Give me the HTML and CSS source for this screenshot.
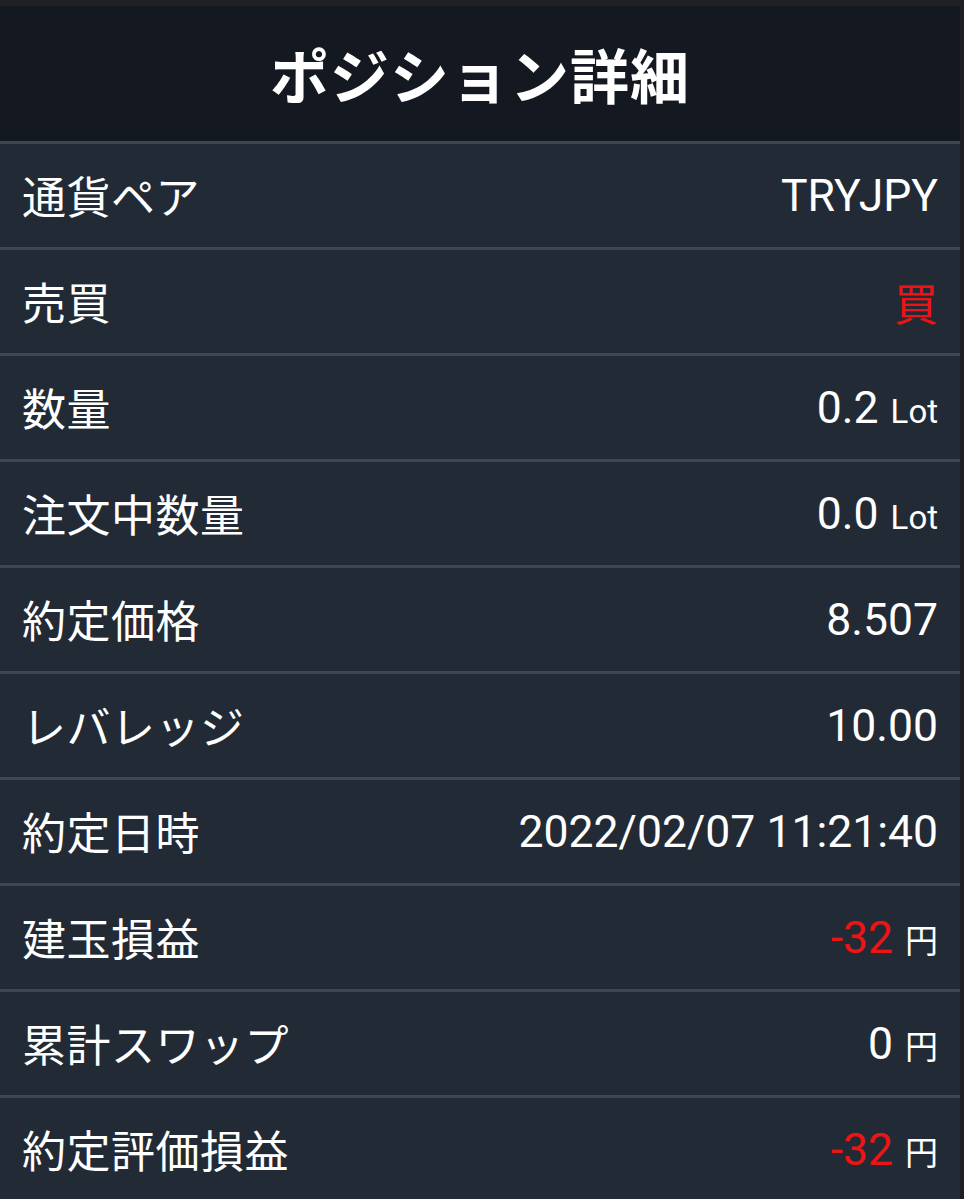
FILE: index.html
```html
<!DOCTYPE html>
<html lang="ja">
<head>
    <meta charset="UTF-8" />
    <meta name="viewport" content="width=device-width, initial-scale=1.0"/>
    <title>ポジション詳細</title>
    <link rel="stylesheet" href="styles.css">
</head>
<body>
    <div class="panel">
        <header class="panel-header">
            <h1>ポジション詳細</h1>
        </header>
        <ul class="detail-list">
            <li class="detail-row"><span class="label">通貨ペア</span><span class="value">TRYJPY</span></li>
            <li class="detail-row"><span class="label">売買</span><span class="value value-buy">買</span></li>
            <li class="detail-row"><span class="label">数量</span><span class="value">0.2<small class="unit">Lot</small></span></li>
            <li class="detail-row"><span class="label">注文中数量</span><span class="value">0.0<small class="unit">Lot</small></span></li>
            <li class="detail-row"><span class="label">約定価格</span><span class="value">8.507</span></li>
            <li class="detail-row"><span class="label">レバレッジ</span><span class="value">10.00</span></li>
            <li class="detail-row"><span class="label">約定日時</span><span class="value">2022/02/07 11:21:40</span></li>
            <li class="detail-row"><span class="label">建玉損益</span><span class="value"><span class="negative">-32</span><small class="unit">円</small></span></li>
            <li class="detail-row"><span class="label">累計スワップ</span><span class="value">0<small class="unit">円</small></span></li>
            <li class="detail-row"><span class="label">約定評価損益</span><span class="value"><span class="negative">-32</span><small class="unit">円</small></span></li>
        </ul>
    </div>
</body>
</html>
```
FILE: styles.css
```css
:root {
    --header-bg: #141820;
    --row-bg: #222b35;
    --line-color: #3c4751;
    --red: #ec1414;
}
html, body {
    height: 100%;
}
body {
    margin: 0;
    background-color: #1b1e22;
    font-family: Roboto, "Noto Sans CJK JP", sans-serif;
    color: #fff;
    overflow: hidden;
}
.panel {
    width: 960px;
    background-color: var(--row-bg);
}
.panel-header {
    height: 135px;
    border-top: 6px solid #1f2023;
    background-color: var(--header-bg);
    display: flex;
    align-items: center;
    justify-content: center;
}
.panel-header h1 {
    margin: 0;
    font-family: "Noto Sans CJK JP", sans-serif;
    font-size: 59px;
    font-weight: 700;
    letter-spacing: 1px;
}
.detail-list {
    list-style: none;
    margin: 0;
    padding: 0;
}
.detail-row {
    height: 103px;
    border-top: 3px solid var(--line-color);
    display: flex;
    align-items: center;
    justify-content: space-between;
    padding: 0 22px;
}
.label {
    font-family: "Noto Sans CJK JP", sans-serif;
    font-size: 44px;
    letter-spacing: 0.5px;
    margin-top: -2px;
}
.value {
    font-size: 44.5px;
    display: flex;
    align-items: baseline;
}
.value-buy {
    color: var(--red);
    font-family: "Noto Sans CJK JP", sans-serif;
    font-size: 44px;
}
.negative { color: var(--red); }
.unit {
    font-size: 33px;
    margin-left: 12px;
}
```
